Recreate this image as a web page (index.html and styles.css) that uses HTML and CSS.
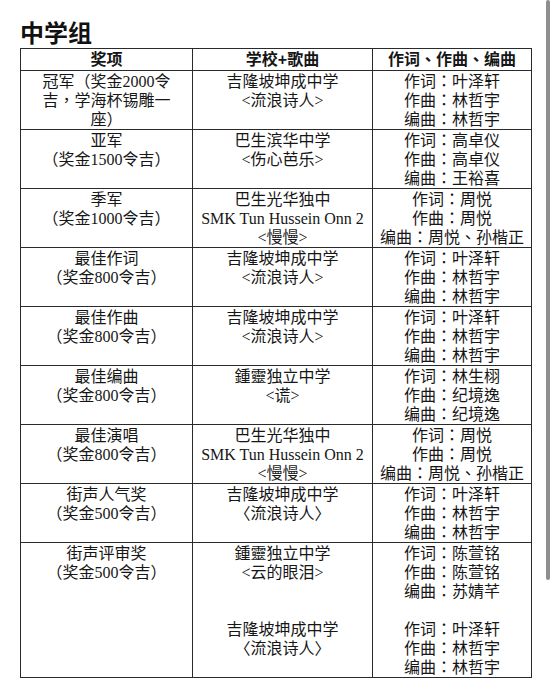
FILE: index.html
```html
<!DOCTYPE html>
<html lang="zh-Hant">
<head>
<meta charset="utf-8">
<link rel="stylesheet" href="styles.css">
</head>
<body>
<div class="page">
  <h1 class="title">中学组</h1>
  <table class="awards">
    <colgroup>
      <col class="c1"><col class="c2"><col class="c3">
    </colgroup>
    <thead>
      <tr><th>奖项</th><th>学校+歌曲</th><th>作词、作曲、编曲</th></tr>
    </thead>
    <tbody>
      <tr>
        <td>冠军（奖金2000令<br>吉，学海杯锡雕一<br>座）</td>
        <td>吉隆坡坤成中学<br>&lt;流浪诗人&gt;</td>
        <td>作词：叶泽轩<br>作曲：林哲宇<br>编曲：林哲宇</td>
      </tr>
      <tr>
        <td>亚军<br><span class="hw">（</span>奖金1500令吉<span class="hw">）</span></td>
        <td>巴生滨华中学<br>&lt;伤心芭乐&gt;</td>
        <td>作词：高卓仪<br>作曲：高卓仪<br>编曲：王裕喜</td>
      </tr>
      <tr>
        <td>季军<br><span class="hw">（</span>奖金1000令吉<span class="hw">）</span></td>
        <td>巴生光华独中<br>SMK Tun Hussein Onn 2<br>&lt;慢慢&gt;</td>
        <td>作词：周悦<br>作曲：周悦<br>编曲：周悦、孙楷正</td>
      </tr>
      <tr>
        <td>最佳作词<br><span class="hw">（</span>奖金800令吉<span class="hw">）</span></td>
        <td>吉隆坡坤成中学<br>&lt;流浪诗人&gt;</td>
        <td>作词：叶泽轩<br>作曲：林哲宇<br>编曲：林哲宇</td>
      </tr>
      <tr>
        <td>最佳作曲<br><span class="hw">（</span>奖金800令吉<span class="hw">）</span></td>
        <td>吉隆坡坤成中学<br>&lt;流浪诗人&gt;</td>
        <td>作词：叶泽轩<br>作曲：林哲宇<br>编曲：林哲宇</td>
      </tr>
      <tr>
        <td>最佳编曲<br><span class="hw">（</span>奖金800令吉<span class="hw">）</span></td>
        <td>鍾靈独立中学<br>&lt;谎&gt;</td>
        <td>作词：林生栩<br>作曲：纪境逸<br>编曲：纪境逸</td>
      </tr>
      <tr>
        <td>最佳演唱<br><span class="hw">（</span>奖金800令吉<span class="hw">）</span></td>
        <td>巴生光华独中<br>SMK Tun Hussein Onn 2<br>&lt;慢慢&gt;</td>
        <td>作词：周悦<br>作曲：周悦<br>编曲：周悦、孙楷正</td>
      </tr>
      <tr>
        <td>街声人气奖<br><span class="hw">（</span>奖金500令吉<span class="hw">）</span></td>
        <td>吉隆坡坤成中学<br>〈流浪诗人〉</td>
        <td>作词：叶泽轩<br>作曲：林哲宇<br>编曲：林哲宇</td>
      </tr>
      <tr>
        <td>街声评审奖<br><span class="hw">（</span>奖金500令吉<span class="hw">）</span></td>
        <td>鍾靈独立中学<br>&lt;云的眼泪&gt;<br><br><br>吉隆坡坤成中学<br>〈流浪诗人〉</td>
        <td>作词：陈萱铭<br>作曲：陈萱铭<br>编曲：苏婧芊<br><br>作词：叶泽轩<br>作曲：林哲宇<br>编曲：林哲宇</td>
      </tr>
    </tbody>
  </table>
</div>
<div class="scrollbar"></div>
</body>
</html>
```
FILE: styles.css
```css
html, body {
  margin: 0;
  padding: 0;
  background: #ffffff;
}

body {
  font-family: "Liberation Serif", "Noto Sans CJK TC", serif;
  color: #161616;
}

.page {
  padding-left: 20px;
  width: 511px;
}

.title {
  margin: 18px 0 2px;
  font-family: "Noto Sans CJK SC", sans-serif;
  font-size: 24px;
  line-height: 28px;
  font-weight: 700;
  color: #111;
}

.awards {
  width: 511px;
  border-collapse: collapse;
  table-layout: fixed;
  border: 1px solid #2a2a2a;
}

.c1 { width: 172px; }
.c2 { width: 180px; }
.c3 { width: 159px; }

.awards th,
.awards td {
  border: 1px solid #2a2a2a;
  text-align: center;
  vertical-align: top;
  white-space: nowrap;
  font-size: 16px;
  line-height: 19px;
  padding: 1px 0 0;
}

.awards th {
  font-family: "Liberation Sans", "Noto Sans CJK TC", sans-serif;
  font-weight: 700;
  padding: 1px 0 1px;
}

.hw {
  font-feature-settings: "halt";
}

.scrollbar {
  position: fixed;
  top: 0;
  left: 546px;
  width: 4px;
  height: 580px;
  background: #8e8e8e;
  border-radius: 2px;
}
```
